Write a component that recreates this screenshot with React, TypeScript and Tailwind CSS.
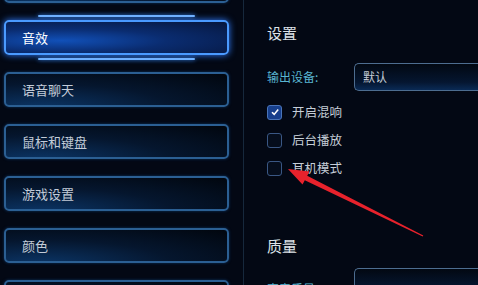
const font = { fontFamily: '"Noto Sans CJK SC", "Noto Sans", sans-serif' };

const menu = ["", "音效", "语音聊天", "鼠标和键盘", "游戏设置", "颜色", ""];

function MenuButton({ label, active }: { label: string; active?: boolean }) {
  if (active) {
    return (
      <div className="relative h-[35px] shrink-0">
        <span className="absolute left-[34px] right-[34px] top-[-5px] h-[2px] rounded bg-[#6fb0ff] shadow-[0_0_4px_#3a8cff]" />
        <div className="flex h-full items-center rounded-[5px] border-2 border-[#4a9aff] bg-[radial-gradient(ellipse_at_25%_60%,#1150b8_0%,#0a2c70_45%,#06163c_100%)] pl-[16px] text-[13px] text-white shadow-[0_0_7px_#2f7cff]">
          {label}
        </div>
        <span className="absolute left-[34px] right-[34px] bottom-[-5px] h-[2px] rounded bg-[#6fb0ff] shadow-[0_0_4px_#3a8cff]" />
      </div>
    );
  }
  return (
    <div className="flex h-[35px] shrink-0 items-center rounded-[5px] border-2 border-[#2b5f93] bg-[radial-gradient(ellipse_at_15%_110%,#0b3566_0%,#05162e_50%,#01060e_100%)] pl-[16px] text-[13px] text-[#c3ccd8] shadow-[0_0_3px_#0e3360]">
      {label}
    </div>
  );
}

function Checkbox({ label, checked }: { label: string; checked?: boolean }) {
  return (
    <div className="flex h-[28px] items-center gap-[10px]">
      <div
        className={
          checked
            ? "flex h-[15px] w-[15px] items-center justify-center rounded-[3px] border border-[#4a74b8] bg-[#173f8c]"
            : "h-[15px] w-[15px] rounded-[3px] border border-[#3a5784] bg-[#050d1c]"
        }
      >
        {checked && (
          <svg width="10" height="10" viewBox="0 0 10 10">
            <path d="M2 5.2 L4.2 7.4 L8.2 2.6" fill="none" stroke="#ffffff" strokeWidth="1.6" />
          </svg>
        )}
      </div>
      <span className="text-[12.5px] text-[#c6ced8]">{label}</span>
    </div>
  );
}

function SelectBox({ value }: { value: string }) {
  return (
    <div className="flex h-[28px] flex-1 items-center rounded-l-[5px] border border-r-0 border-[#4d6d90] bg-[linear-gradient(180deg,#020812_0%,#051630_70%,#0a2a55_100%)] pl-[8px] text-[12px] text-[#c2cad4]">
      {value}
    </div>
  );
}

export default function App() {
  return (
    <div
      className="relative flex h-[285px] w-[478px] overflow-hidden bg-[#030814]"
      style={font}
    >
      <div className="flex w-[244px] shrink-0 flex-col gap-[17px] border-r border-[#16283c] pl-[4px] pr-[14px] pt-0 mt-[-32px]">
        {menu.map((m, i) => (
          <MenuButton key={i} label={m} active={m === "音效"} />
        ))}
      </div>

      <div className="flex flex-1 flex-col pl-[23px] pt-[22px]">
        <h2 className="text-[15px] leading-[22px] text-[#dde2e8]">设置</h2>
        <div className="mt-[19px] flex items-center">
          <span className="w-[87px] text-[12px] text-[#59b4d0]">输出设备:</span>
          <SelectBox value="默认" />
        </div>
        <div className="mt-[7px] flex flex-col">
          <Checkbox label="开启混响" checked />
          <Checkbox label="后台播放" />
          <Checkbox label="耳机模式" />
        </div>
        <h2 className="mt-[53px] text-[15px] leading-[22px] text-[#dde2e8]">质量</h2>
        <div className="mt-[11px] flex items-start">
          <span className="mt-[12px] w-[87px] text-[12px] text-[#59b4d0]">声音质量:</span>
          <SelectBox value="" />
        </div>
      </div>

      {/* red annotation arrow */}
      <svg
        className="pointer-events-none absolute left-0 top-0"
        width="478"
        height="285"
        viewBox="0 0 478 285"
      >
        <polygon
          points="288,169 309.5,171.5 307.2,175.7 423.3,235.5 422.7,236.6 304.8,180.2 302.5,184.5"
          fill="#e8222c"
        />
      </svg>
    </div>
  );
}
